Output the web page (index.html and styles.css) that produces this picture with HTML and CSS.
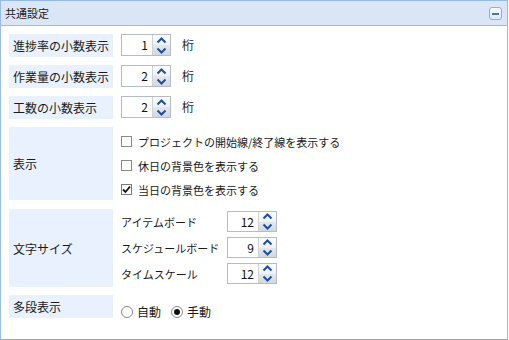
FILE: index.html
```html
<!DOCTYPE html>
<html lang="ja">
<head>
<meta charset="utf-8">
<link rel="stylesheet" href="styles.css">
</head>
<body>
<div class="panel">
  <div class="header">
    <span class="title">共通設定</span>
    <span class="collapse"><span class="dash"></span></span>
  </div>
  <div class="content">
    <div class="label">進捗率の小数表示</div>
    <div class="field">
      <div class="spin"><span class="num">1</span><span class="btns"><span class="up"><svg width="11" height="7" viewBox="0 0 11 7"><path d="M1.5 5.5 L5.5 1.5 L9.5 5.5" fill="none" stroke="#1f4f9c" stroke-width="2"/></svg></span><span class="down"><svg width="11" height="7" viewBox="0 0 11 7"><path d="M1.5 1.5 L5.5 5.5 L9.5 1.5" fill="none" stroke="#1f4f9c" stroke-width="2"/></svg></span></span></div>
      <span class="unit">桁</span>
    </div>

    <div class="label">作業量の小数表示</div>
    <div class="field">
      <div class="spin"><span class="num">2</span><span class="btns"><span class="up"><svg width="11" height="7" viewBox="0 0 11 7"><path d="M1.5 5.5 L5.5 1.5 L9.5 5.5" fill="none" stroke="#1f4f9c" stroke-width="2"/></svg></span><span class="down"><svg width="11" height="7" viewBox="0 0 11 7"><path d="M1.5 1.5 L5.5 5.5 L9.5 1.5" fill="none" stroke="#1f4f9c" stroke-width="2"/></svg></span></span></div>
      <span class="unit">桁</span>
    </div>

    <div class="label">工数の小数表示</div>
    <div class="field">
      <div class="spin"><span class="num">2</span><span class="btns"><span class="up"><svg width="11" height="7" viewBox="0 0 11 7"><path d="M1.5 5.5 L5.5 1.5 L9.5 5.5" fill="none" stroke="#1f4f9c" stroke-width="2"/></svg></span><span class="down"><svg width="11" height="7" viewBox="0 0 11 7"><path d="M1.5 1.5 L5.5 5.5 L9.5 1.5" fill="none" stroke="#1f4f9c" stroke-width="2"/></svg></span></span></div>
      <span class="unit">桁</span>
    </div>

    <div class="label tall">表示</div>
    <div class="field checks">
      <div class="check"><span class="box"></span><span>プロジェクトの開始線/終了線を表示する</span></div>
      <div class="check"><span class="box"></span><span>休日の背景色を表示する</span></div>
      <div class="check"><span class="box checked"><svg width="9" height="9" viewBox="0 0 9 9"><path d="M1 4.5 L3.5 7 L8 1.5" fill="none" stroke="#111" stroke-width="1.8"/></svg></span><span>当日の背景色を表示する</span></div>
    </div>

    <div class="label tall2">文字サイズ</div>
    <div class="field sizes">
      <div class="size"><span class="sub">アイテムボード</span><div class="spin small"><span class="num">12</span><span class="btns"><span class="up"><svg width="11" height="7" viewBox="0 0 11 7"><path d="M1.5 5.5 L5.5 1.5 L9.5 5.5" fill="none" stroke="#1f4f9c" stroke-width="2"/></svg></span><span class="down"><svg width="11" height="7" viewBox="0 0 11 7"><path d="M1.5 1.5 L5.5 5.5 L9.5 1.5" fill="none" stroke="#1f4f9c" stroke-width="2"/></svg></span></span></div></div>
      <div class="size"><span class="sub">スケジュールボード</span><div class="spin small"><span class="num">9</span><span class="btns"><span class="up"><svg width="11" height="7" viewBox="0 0 11 7"><path d="M1.5 5.5 L5.5 1.5 L9.5 5.5" fill="none" stroke="#1f4f9c" stroke-width="2"/></svg></span><span class="down"><svg width="11" height="7" viewBox="0 0 11 7"><path d="M1.5 1.5 L5.5 5.5 L9.5 1.5" fill="none" stroke="#1f4f9c" stroke-width="2"/></svg></span></span></div></div>
      <div class="size"><span class="sub">タイムスケール</span><div class="spin small"><span class="num">12</span><span class="btns"><span class="up"><svg width="11" height="7" viewBox="0 0 11 7"><path d="M1.5 5.5 L5.5 1.5 L9.5 5.5" fill="none" stroke="#1f4f9c" stroke-width="2"/></svg></span><span class="down"><svg width="11" height="7" viewBox="0 0 11 7"><path d="M1.5 1.5 L5.5 5.5 L9.5 1.5" fill="none" stroke="#1f4f9c" stroke-width="2"/></svg></span></span></div></div>
    </div>

    <div class="label">多段表示</div>
    <div class="field radios">
      <span class="radio"><span class="circle"></span><span>自動</span></span>
      <span class="radio"><span class="circle on"></span><span>手動</span></span>
    </div>
  </div>
</div>
</body>
</html>
```

FILE: styles.css
```css
html, body {
  margin: 0;
  padding: 0;
  background: #ffffff;
}
body {
  font-family: "Noto Sans CJK JP", "DejaVu Sans", sans-serif;
  color: #1a1a1a;
  font-size: 12px;
}
.panel {
  box-sizing: border-box;
  width: 508px;
  height: 340px;
  border: 1px solid #99bbe8;
  border-bottom-color: #a5a5a5;
  border-right-color: #a8b8cc;
  background: #fff;
}
.header {
  height: 24px;
  border-bottom: 1px solid #99bbe8;
  background: #dae6f6;
  display: flex;
  align-items: center;
  justify-content: space-between;
  padding: 0 5px 0 4px;
}
.title {
  font-size: 11px;
  color: #222;
  line-height: 1;
}
.collapse {
  box-sizing: border-box;
  width: 13px;
  height: 13px;
  border: 1px solid #8eafdb;
  border-radius: 3px;
  background: linear-gradient(#f6f9fe, #dde8f7);
  display: flex;
  align-items: center;
  justify-content: center;
  margin-top: 1px;
}
.dash {
  width: 7px;
  height: 2px;
  background: #4f74ad;
}
.content {
  display: grid;
  grid-template-columns: 104px 1fr;
  column-gap: 8px;
  row-gap: 8px;
  padding: 8px 0 0 8px;
}
.label {
  background: #e8f1fd;
  height: 23px;
  display: flex;
  align-items: center;
  padding-left: 4px;
  font-size: 12px;
}
.label.tall { height: 73px; }
.label.tall2 { height: 78px; }
.field {
  display: flex;
  align-items: flex-start;
}
.spin {
  box-sizing: border-box;
  width: 50px;
  height: 22px;
  border: 1px solid #b5bcc7;
  display: flex;
  background: #fff;
}
.spin.small { height: 21px; }
.num {
  flex: 1;
  text-align: right;
  padding-right: 4px;
  font-size: 12px;
  line-height: 20px;
  color: #111;
}
.btns {
  width: 17px;
  border-left: 1px solid #cdd3db;
  display: flex;
  flex-direction: column;
}
.up, .down {
  flex: 1;
  display: flex;
  align-items: center;
  justify-content: center;
}
.up { background: linear-gradient(#fbfcfd, #eef1f5); }
.down { background: linear-gradient(#e4e7eb, #d3d8de); }
.unit {
  margin-left: 11px;
  line-height: 22px;
}
.checks {
  flex-direction: column;
  padding-top: 3px;
  gap: 1px;
}
.check {
  height: 23px;
  display: flex;
  align-items: center;
  font-size: 11px;
}
.box {
  box-sizing: border-box;
  width: 11px;
  height: 11px;
  border: 1px solid #8a8a8a;
  background: #fff;
  margin-right: 6px;
  display: flex;
  align-items: center;
  justify-content: center;
}
.box.checked { border-color: #7a7a7a; }
.sizes {
  flex-direction: column;
  padding-top: 2px;
  gap: 5px;
}
.size {
  display: flex;
  align-items: center;
  height: 21px;
}
.sub {
  width: 106px;
  font-size: 11px;
}
.radios {
  align-items: center;
  padding-top: 8px;
  gap: 10px;
}
.radio {
  display: flex;
  align-items: center;
  gap: 4px;
  font-size: 12px;
}
.circle {
  box-sizing: border-box;
  width: 12px;
  height: 12px;
  border: 1px solid #8a8a8a;
  border-radius: 50%;
  background: #fff;
  display: flex;
  align-items: center;
  justify-content: center;
}
.circle.on::after {
  content: "";
  width: 6px;
  height: 6px;
  border-radius: 50%;
  background: #111;
}
```
